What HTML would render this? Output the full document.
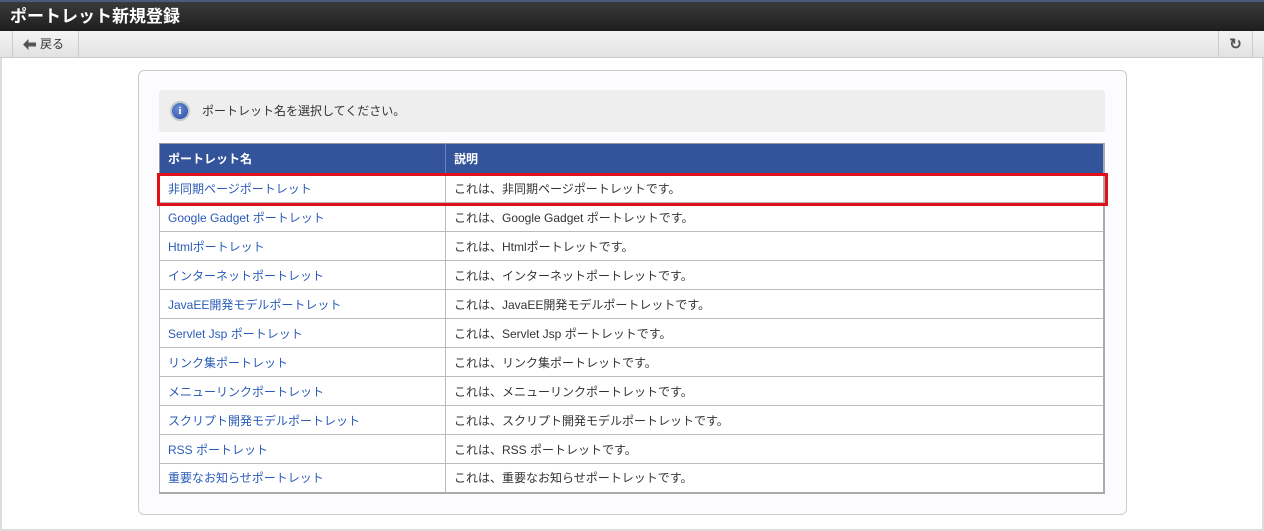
<!DOCTYPE html><html><head><meta charset="utf-8"><style>
*{margin:0;padding:0;box-sizing:border-box}
body{width:1264px;height:531px;background:#fff;font-family:"Liberation Sans","Noto Sans CJK JP",sans-serif;position:relative;overflow:hidden}
.frame{position:absolute;left:0;top:0;width:1264px;height:531px;border:2px solid #ddd;border-top:none}
.title{position:absolute;left:0;top:0;width:1264px;height:31px;background:linear-gradient(#3a3a3a,#1e1e1e);border-top:2px solid #4a5a7a;color:#fff;font-weight:bold;font-size:17px;line-height:29px;padding-left:10px}
.tb{position:absolute;left:0;top:31px;width:1264px;height:27px;background:linear-gradient(#f4f4f4,#e2e2e2);border-bottom:1px solid #ccc}
.back{position:absolute;left:12px;top:0;width:67px;height:27px;border-left:1px solid #ccc;border-right:1px solid #ccc;font-size:12px;line-height:27px;padding-left:10px;color:#333;white-space:nowrap}
.back svg{vertical-align:-2px;margin-right:4px}
.rel{position:absolute;left:1218px;top:0;width:35px;height:27px;border-left:1px solid #ccc;border-right:1px solid #ccc;text-align:center;line-height:27px;font-weight:bold;color:#555;font-size:15px}
.panel{position:absolute;left:138px;top:70px;width:989px;height:445px;border:1px solid #ccc;border-radius:6px;background:#fcfcfe}
.info{position:absolute;left:159px;top:90px;width:946px;height:42px;background:#eee;border-radius:3px;font-size:12px;line-height:42px;padding-left:43px;color:#333}
.ic{position:absolute;left:11px;top:11px;width:20px;height:20px;border-radius:50%;background:radial-gradient(circle at 40% 35%,#6a8ad8,#2a4aa0);border:2px solid #bcc;color:#fff;font-size:11px;font-weight:bold;line-height:16px;text-align:center;font-family:"Liberation Serif",serif}
table{position:absolute;left:159px;top:143px;width:946px;border-collapse:collapse;font-size:12px;border:1px solid #999;border-right:2px solid #aaa;border-bottom:2px solid #aaa}
th{background:#33539a;color:#fff;text-align:left;height:30px;padding-left:8px;font-weight:bold;border-right:1px solid #6a80b8}
td{height:29px;padding-left:8px;border:1px solid #bbb;color:#333;background:#fff}
td:first-child{color:#2a5bb8;width:286px}
.red{position:absolute;left:157px;top:173px;width:951px;height:33px;border:3px solid #e0101a}
</style></head><body>
<div class="frame"></div>
<div class="title">ポートレット新規登録</div>
<div class="tb"><div class="back"><svg width="13" height="11" viewBox="0 0 13 11"><path d="M0 5.5L5.5 0V3.5H13V7.5H5.5V11Z" fill="#555"/></svg>戻る</div><div class="rel">↻</div></div>
<div class="panel"></div>
<div class="info"><div class="ic">i</div>ポートレット名を選択してください。</div>
<table>
<tr><th>ポートレット名</th><th>説明</th></tr>
<tr><td>非同期ページポートレット</td><td>これは、非同期ページポートレットです。</td></tr>
<tr><td>Google Gadget ポートレット</td><td>これは、Google Gadget ポートレットです。</td></tr>
<tr><td>Htmlポートレット</td><td>これは、Htmlポートレットです。</td></tr>
<tr><td>インターネットポートレット</td><td>これは、インターネットポートレットです。</td></tr>
<tr><td>JavaEE開発モデルポートレット</td><td>これは、JavaEE開発モデルポートレットです。</td></tr>
<tr><td>Servlet Jsp ポートレット</td><td>これは、Servlet Jsp ポートレットです。</td></tr>
<tr><td>リンク集ポートレット</td><td>これは、リンク集ポートレットです。</td></tr>
<tr><td>メニューリンクポートレット</td><td>これは、メニューリンクポートレットです。</td></tr>
<tr><td>スクリプト開発モデルポートレット</td><td>これは、スクリプト開発モデルポートレットです。</td></tr>
<tr><td>RSS ポートレット</td><td>これは、RSS ポートレットです。</td></tr>
<tr><td>重要なお知らせポートレット</td><td>これは、重要なお知らせポートレットです。</td></tr>
</table>
<div class="red"></div>
</body></html>
